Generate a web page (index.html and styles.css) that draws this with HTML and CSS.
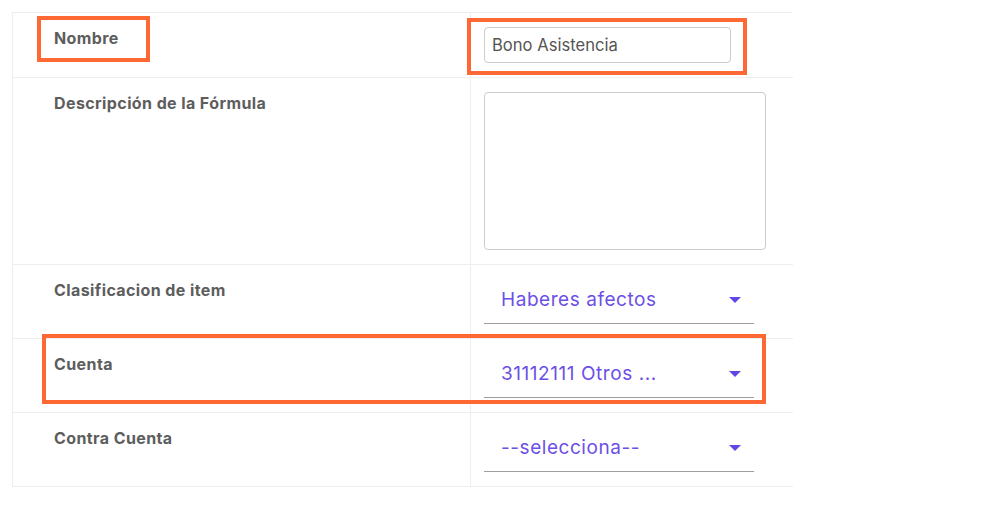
FILE: index.html
```html
<!DOCTYPE html>
<html lang="es">
<head>
<meta charset="utf-8">
<title>Fórmula</title>
<link rel="stylesheet" href="styles.css">
</head>
<body>
<div class="page">
  <div class="form">
    <div class="label-cell"><span class="label">Nombre</span></div>
    <div class="value-cell"><input class="text-input" type="text" value="Bono Asistencia"></div>

    <div class="label-cell"><span class="label">Descripción de la Fórmula</span></div>
    <div class="value-cell"><textarea class="textarea"></textarea></div>

    <div class="label-cell"><span class="label">Clasificacion de item</span></div>
    <div class="value-cell">
      <div class="select"><span class="select-text">Haberes afectos</span><svg class="caret" width="12" height="6" viewBox="0 0 12 6"><path d="M0 0H12L6 6Z"/></svg></div>
    </div>

    <div class="label-cell"><span class="label">Cuenta</span></div>
    <div class="value-cell">
      <div class="select"><span class="select-text">31112111 Otros ...</span><svg class="caret" width="12" height="6" viewBox="0 0 12 6"><path d="M0 0H12L6 6Z"/></svg></div>
    </div>

    <div class="label-cell"><span class="label">Contra Cuenta</span></div>
    <div class="value-cell">
      <div class="select"><span class="select-text">--selecciona--</span><svg class="caret" width="12" height="6" viewBox="0 0 12 6"><path d="M0 0H12L6 6Z"/></svg></div>
    </div>
  </div>

  <div class="mark mark-nombre"></div>
  <div class="mark mark-input"></div>
  <div class="mark mark-cuenta"></div>
</div>
</body>
</html>
```

FILE: styles.css
```css
* { box-sizing: border-box; }

html, body {
  margin: 0;
  padding: 0;
  background: #ffffff;
  font-family: Inter, "Noto Sans", "Liberation Sans", sans-serif;
}

.page {
  position: relative;
  padding: 12px 0 0 12px;
  width: 982px;
  height: 514px;
}

.form {
  display: grid;
  grid-template-columns: 457px 323px;
  width: 780px;
  border-top: 1px solid #eeeeee;
  border-left: 1px solid #eeeeee;
}

.label-cell {
  padding: 14px 14px 14px 41px;
  border-bottom: 1px solid #eeeeee;
}

.label {
  display: block;
  font-size: 16px;
  letter-spacing: 0.4px;
  line-height: 22px;
  font-weight: 700;
  color: #5d5d5d;
}

.value-cell {
  padding: 14px 13px;
  border-left: 1px solid #eeeeee;
  border-bottom: 1px solid #eeeeee;
}

.text-input {
  display: block;
  width: 247px;
  height: 36px;
  margin: 0;
  padding: 0 7px;
  border: 1px solid #cccccc;
  border-radius: 4px;
  font-family: inherit;
  font-size: 16.6px;
  color: #555555;
  background: #fff;
  outline: none;
}

.textarea {
  display: block;
  width: 282px;
  height: 158px;
  margin: 0;
  padding: 6px;
  border: 1px solid #cccccc;
  border-radius: 4px;
  resize: none;
  font-family: inherit;
  background: #fff;
}

.select {
  display: flex;
  align-items: center;
  justify-content: space-between;
  width: 270px;
  height: 45px;
  padding: 0 13px 0 17px;
  border-bottom: 1px solid #9e9e9e;
}

.select-text {
  font-size: 19px;
  letter-spacing: 0.55px;
  line-height: 24px;
  color: #6b50e6;
  padding-bottom: 2px;
}

.caret {
  display: block;
  fill: #6446e6;
  margin-bottom: 2px;
}

.mark {
  position: absolute;
  border: 4.5px solid #fe6834;
}

.mark-nombre { left: 37px; top: 16px; width: 113px; height: 46px; }
.mark-input { left: 467px; top: 18px; width: 280px; height: 57px; }
.mark-cuenta { left: 42px; top: 334px; width: 724px; height: 70px; }
```
